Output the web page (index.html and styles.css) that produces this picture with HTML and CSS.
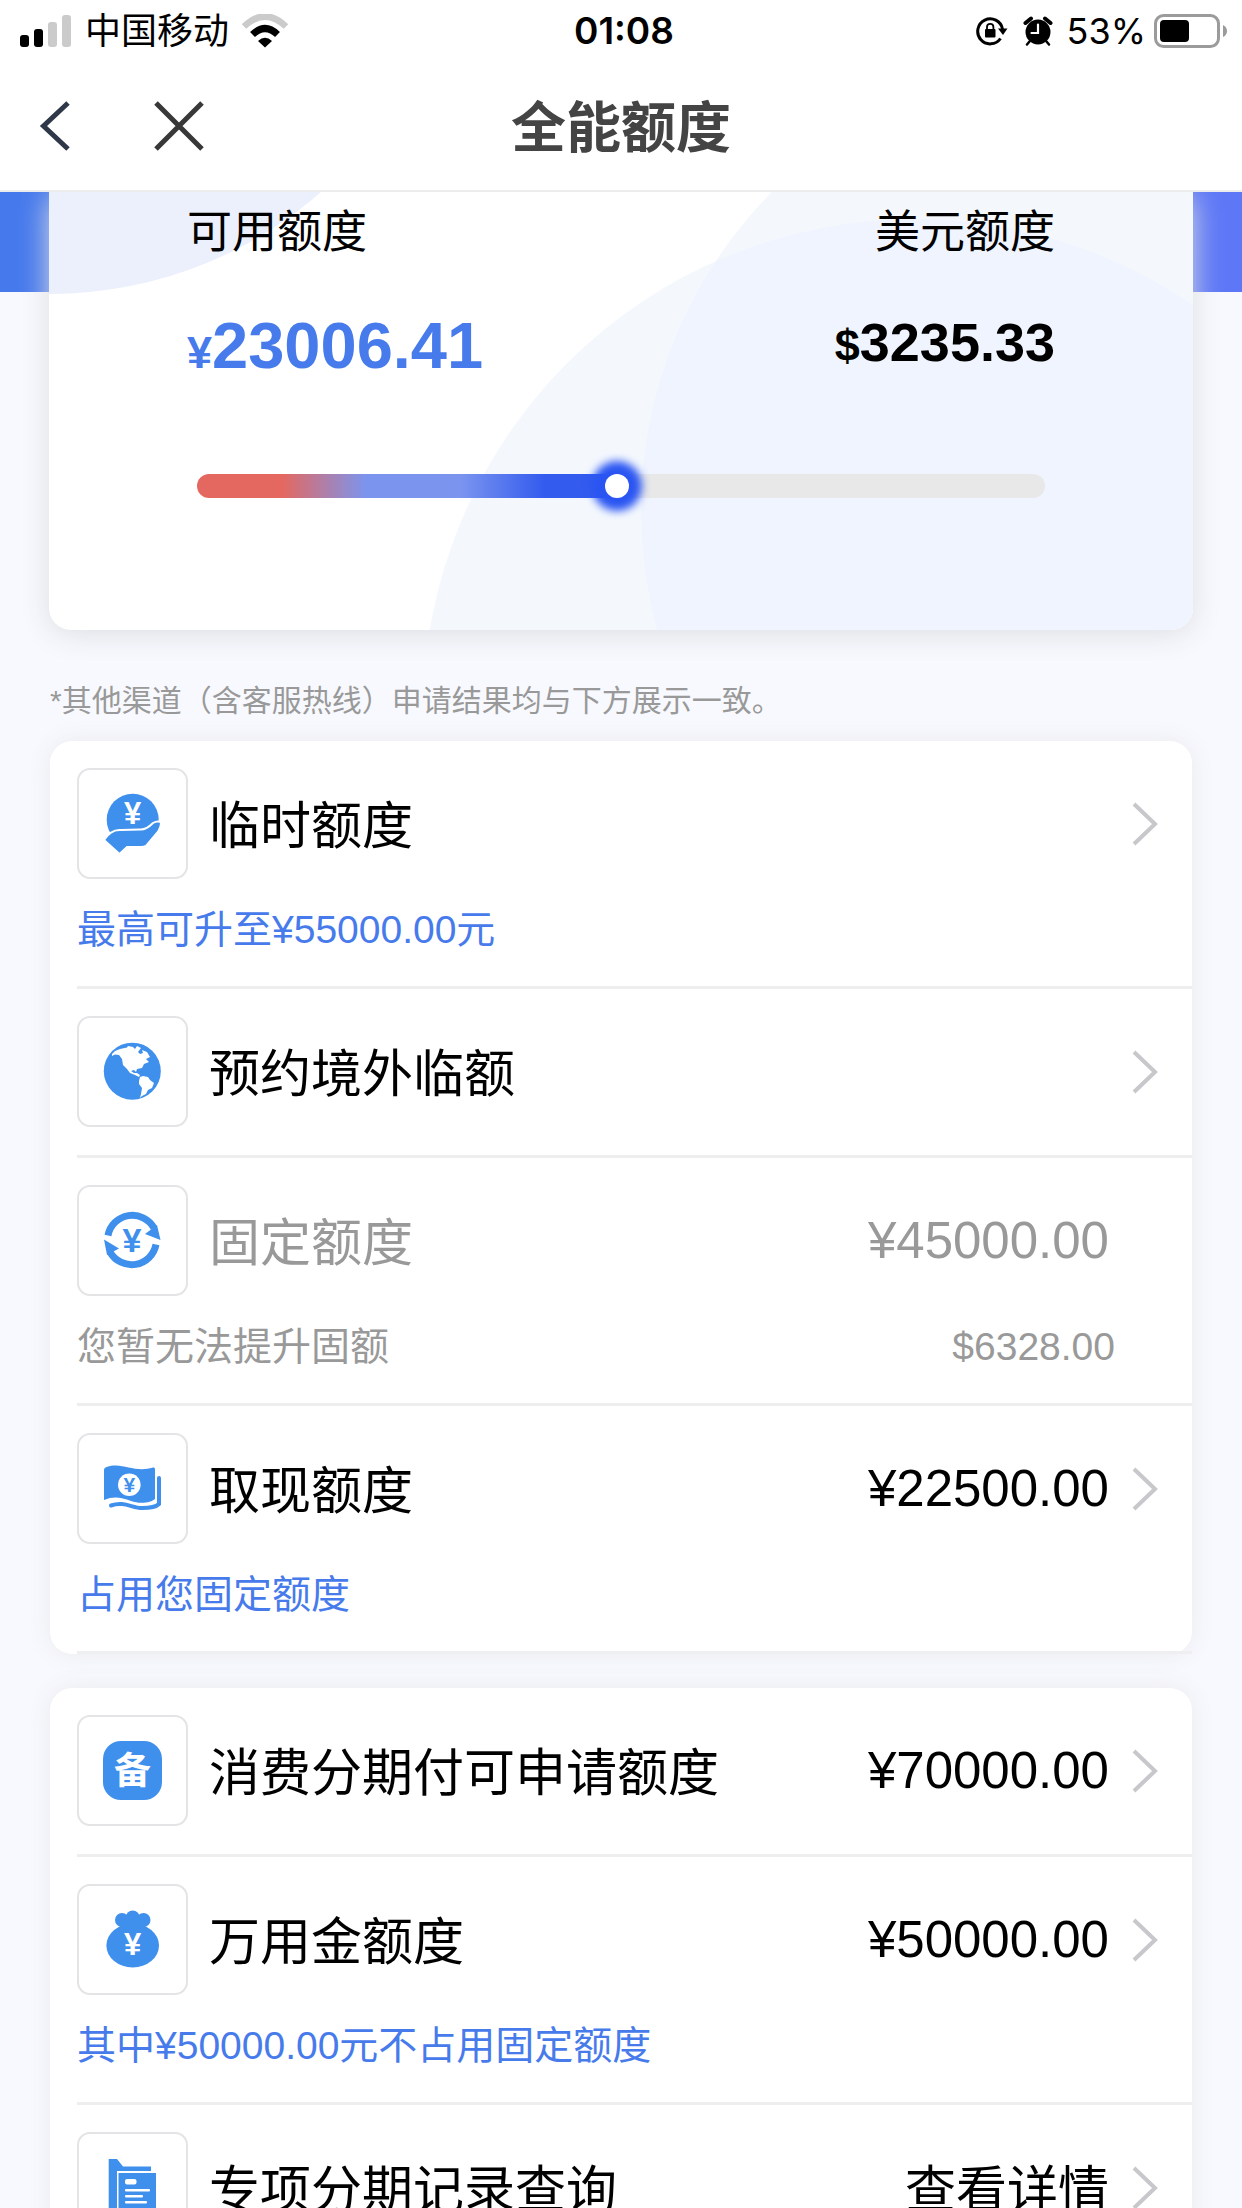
FILE: index.html
```html
<!DOCTYPE html>
<html lang="zh-CN">
<head>
<meta charset="utf-8">
<meta name="viewport" content="width=device-width, initial-scale=1">
<title>全能额度</title>
<link rel="stylesheet" href="styles.css">
</head>
<body>
<div class="app">
  <div class="status">
    <div class="status-left">
      <svg width="52" height="34" viewBox="0 0 52 34" aria-hidden="true">
        <rect x="0" y="21" width="9" height="12" rx="3"/>
        <rect x="14" y="15" width="9" height="18" rx="3"/>
        <rect x="28" y="8" width="9" height="25" rx="3" fill="#cbcbcb"/>
        <rect x="42" y="1" width="9" height="32" rx="3" fill="#cbcbcb"/>
      </svg>
      <span class="carrier">中国移动</span>
      <svg width="46" height="34" viewBox="0 0 46 34" fill="none" aria-hidden="true">
        <path d="M2 12.500Q23-7.500 44 12.500" stroke="#cbcbcb" stroke-width="6.500"/>
        <path d="M10.500 20.500Q23 8.500 35.500 20.500" stroke="#000" stroke-width="7"/>
        <path d="M16 27Q23 20.500 30 27L23 33.500Z" fill="#000"/>
      </svg>
    </div>
    <span class="time">01:08</span>
    <div class="status-right">
      <svg width="34" height="30" viewBox="0 0 34 30" fill="none" aria-hidden="true">
        <path d="M25.500 22.500A12.500 12.500 0 1 1 27.500 13" stroke="#000" stroke-width="3"/>
        <path d="M23 12.500H32.500L28 19Z" fill="#000"/>
        <rect x="10" y="13" width="10.500" height="8.500" rx="1" fill="#000"/>
        <path d="M12 13.500V11a3.200 3.200 0 0 1 6.400 0V13.500" stroke="#000" stroke-width="1.800"/>
      </svg>
      <svg width="30" height="30" viewBox="0 0 30 30" fill="none" stroke-linecap="round" aria-hidden="true">
        <circle cx="15" cy="16" r="12.500" fill="#000"/>
        <path d="M2.500 7L8 2.500M27.500 7L22 2.500" stroke="#000" stroke-width="4"/>
        <path d="M6.500 25.500L4 28.500M23.500 25.500L26 28.500" stroke="#000" stroke-width="2.500"/>
        <path d="M15 8.500V17H8.500" stroke="#fff" stroke-width="2.200"/>
      </svg>
      <div class="power">
        <span>53%</span>
        <svg width="74" height="34" viewBox="0 0 74 34" fill="none" aria-hidden="true">
          <rect x="1.500" y="1.500" width="63" height="31" rx="8" stroke="#9b9b9b" stroke-width="3"/>
          <rect x="6" y="6" width="29" height="22" rx="4" fill="#000"/>
          <path d="M69 11Q73 13 73 17T69 23Z" fill="#9b9b9b"/>
        </svg>
      </div>
    </div>
  </div>

  <header class="nav">
    <div class="nav-buttons">
      <button class="icon-button" type="button" aria-label="返回">
        <svg width="54" height="54" viewBox="0 0 54 54" fill="none" stroke="#2f3849" stroke-width="5"><path d="M40 4L15.500 27L40 50"/></svg>
      </button>
      <button class="icon-button" type="button" aria-label="关闭">
        <svg width="54" height="54" viewBox="0 0 54 54" fill="none" stroke="#383838" stroke-width="5"><path d="M4 4L50 50M50 4L4 50"/></svg>
      </button>
    </div>
    <h1 class="nav-title">全能额度</h1>
  </header>

  <main class="content">
    <section class="summary">
      <div class="summary-card">
        <svg class="summary-bg" viewBox="0 0 1144 438" preserveAspectRatio="xMaxYMin slice" aria-hidden="true">
          <clipPath id="overlap"><circle cx="866" cy="519" r="492"/></clipPath>
          <circle cx="1" cy="-309" r="411" fill="#ecf0fc"/>
          <circle cx="866" cy="519" r="492" fill="#f4f8fd"/>
          <circle cx="1044" cy="318" r="452" fill="#f4f8fd"/>
          <circle cx="1044" cy="318" r="452" fill="#f0f4fe" clip-path="url(#overlap)"/>
        </svg>
        <dl class="limits">
          <div class="limit">
            <dt>可用额度</dt>
            <dd class="limit-main"><small>¥</small>23006.41</dd>
          </div>
          <div class="limit limit-end">
            <dt>美元额度</dt>
            <dd class="limit-usd"><small>$</small>3235.33</dd>
          </div>
        </dl>
        <input class="meter" type="range" min="0" max="1000" value="495" aria-label="可用额度比例">
      </div>
    </section>

    <p class="note">*其他渠道（含客服热线）申请结果均与下方展示一致。</p>

    <ul class="list">
      <li class="item"><a class="link" href="#temp">
        <div class="row">
          <svg class="badge" viewBox="0 0 111 111" aria-hidden="true">
            <circle cx="55.700" cy="51.700" r="26"/>
            <path d="M27 72Q34 61 44 62L63 61.500Q69 62 76 55Q80 52.500 84 54Q84 60 80 65L69 78Q67 79 64 79H50L42.500 86Z" stroke="#fff" stroke-width="2"/>
            <text class="glyph-yen" x="55.500" y="56" font-size="31">¥</text>
          </svg>
          <span class="name">临时额度</span>
          <svg class="chevron" viewBox="0 0 26 44" aria-hidden="true"><path d="M2 2L23 22L2 42"/></svg>
        </div>
        <div class="sub"><span>最高可升至¥55000.00元</span></div>
      </a></li>
      <li class="item"><a class="link" href="#abroad">
        <div class="row">
          <svg class="badge" viewBox="0 0 111 111" aria-hidden="true">
            <circle cx="55.300" cy="55.200" r="28.500"/>
            <path fill="#fff" d="M35 38L38 35L43 33L50 31.500L51 30L56 31L58 33L60 30L64 32L61 36L63 38L66 37L65 34L70 36L73 41L69 43L72 46L67 48L65 52L60 53L59 56L57 54L54 55L57 57L60 57L63 59L62 61L58 59L53 57L50 53L46 49L45 43L42 39L38 38.500L35 40Z"/>
            <path fill="#fff" d="M63 61L66 60L71 61L73 64L77 67L75 72L71 74L69 78L65 80L63 82L64 78L65 72L62 68L62 65Z"/>
          </svg>
          <span class="name">预约境外临额</span>
          <svg class="chevron" viewBox="0 0 26 44" aria-hidden="true"><path d="M2 2L23 22L2 42"/></svg>
        </div>
      </a></li>
      <li class="item item-off">
        <div class="row">
          <svg class="badge" viewBox="0 0 111 111" aria-hidden="true">
            <g class="stroke" stroke-width="7"><path d="M31 50.500A24.800 24.800 0 0 1 77 43"/><path d="M79 59.500A24.800 24.800 0 0 1 33 67"/></g>
            <path d="M68 49L80 40L83.500 55Z"/><path d="M42 63.500L27 54.500L30 70Z"/>
            <text class="glyph-yen glyph-blue" x="55" y="67" font-size="34">¥</text>
          </svg>
          <span class="name">固定额度</span>
          <span class="amount">¥45000.00</span>
        </div>
        <div class="sub"><span>您暂无法提升固额</span><span class="sub-end">$6328.00</span></div>
      </li>
      <li class="item"><a class="link" href="#cash">
        <div class="row">
          <svg class="badge" viewBox="0 0 111 111" aria-hidden="true">
            <path d="M27 37C27 34 32 32.500 39 32.500C50 33 62 39 76 34.500Q78 34 78 36V66C74 70 62 71 54 68C44 64 36 63 27 67Z"/>
            <path class="stroke" stroke-width="4" stroke-linecap="round" d="M34 72.500C47 68 55 75 65 75C73 75 79 74 82 71V45"/>
            <circle cx="52.300" cy="51.700" r="11.300" fill="#fff"/>
            <text class="glyph-yen glyph-blue" x="52.300" y="59" font-size="21">¥</text>
          </svg>
          <span class="name">取现额度</span>
          <span class="amount">¥22500.00</span>
          <svg class="chevron" viewBox="0 0 26 44" aria-hidden="true"><path d="M2 2L23 22L2 42"/></svg>
        </div>
        <div class="sub"><span>占用您固定额度</span></div>
      </a></li>
    </ul>

    <ul class="list">
      <li class="item"><a class="link" href="#installment">
        <div class="row">
          <svg class="badge" viewBox="0 0 111 111" aria-hidden="true">
            <rect x="26" y="26" width="59" height="59" rx="18"/>
            <text class="glyph-cjk" x="55.500" y="69" font-size="37">备</text>
          </svg>
          <span class="name">消费分期付可申请额度</span>
          <span class="amount">¥70000.00</span>
          <svg class="chevron" viewBox="0 0 26 44" aria-hidden="true"><path d="M2 2L23 22L2 42"/></svg>
        </div>
      </a></li>
      <li class="item"><a class="link" href="#wanyong">
        <div class="row">
          <svg class="badge" viewBox="0 0 111 111" aria-hidden="true">
            <ellipse cx="55.700" cy="61.500" rx="26.300" ry="22"/>
            <circle cx="45" cy="36" r="7"/><circle cx="55.700" cy="33.500" r="7"/><circle cx="66.500" cy="36" r="7"/>
            <path d="M43 35H69L66 42Q70 44 75 48H36Q41 44 45 42Z"/>
            <text class="glyph-yen" x="55.700" y="71" font-size="31">¥</text>
          </svg>
          <span class="name">万用金额度</span>
          <span class="amount">¥50000.00</span>
          <svg class="chevron" viewBox="0 0 26 44" aria-hidden="true"><path d="M2 2L23 22L2 42"/></svg>
        </div>
        <div class="sub"><span>其中¥50000.00元不占用固定额度</span></div>
      </a></li>
      <li class="item"><a class="link" href="#records">
        <div class="row">
          <svg class="badge" viewBox="0 0 111 111" aria-hidden="true">
            <path d="M31.700 27H40L46 34.500H74V39H40V84H31.700Z"/>
            <rect x="41.500" y="41" width="37.500" height="43"/>
            <g fill="#fff"><rect x="48" y="47" width="11.500" height="5.500" rx="2"/><rect x="48" y="57" width="25" height="2.600" rx="1"/><rect x="48" y="63" width="18" height="2.600" rx="1"/><rect x="48" y="69" width="22" height="2.600" rx="1"/></g>
          </svg>
          <span class="name">专项分期记录查询</span>
          <span class="amount amount-text">查看详情</span>
          <svg class="chevron" viewBox="0 0 26 44" aria-hidden="true"><path d="M2 2L23 22L2 42"/></svg>
        </div>
      </a></li>
    </ul>
  </main>
</div>
</body>
</html>
```
FILE: styles.css
```css
*, *::before, *::after { box-sizing: border-box; }

body {
  margin: 0;
  background: #f8f9fe;
  color: #000;
  font-family: "Liberation Sans", "Noto Sans CJK SC", sans-serif;
}

h1, p, ul, dl, dd { margin: 0; padding: 0; }
ul { list-style: none; }

.app {
  display: flex;
  flex-direction: column;
  height: 100vh;
}

/* Status bar */
.status {
  display: grid;
  grid-template-columns: 1fr auto 1fr;
  align-items: center;
  height: 62px;
  padding: 0 14px 0 20px;
  background: #fff;
  font-family: Inter, "Noto Sans CJK SC", sans-serif;
  font-size: 36px;
  line-height: 62px;
}
.status svg { display: block; }
.status-left { display: flex; align-items: center; gap: 13px; }
.status-right { display: flex; align-items: center; justify-content: flex-end; gap: 14px; }
.power { display: flex; align-items: center; gap: 8px; }
.time { font-size: 37px; font-weight: 600; }

/* Title bar */
.nav {
  display: grid;
  grid-template-columns: 1fr auto 1fr;
  align-items: center;
  height: 130px;
  border-bottom: 2px solid #ececec;
  background: #fff;
}
.nav-buttons { display: flex; gap: 70px; padding-left: 28px; }
.icon-button { padding: 0; border: 0; background: none; }
.icon-button svg { display: block; }
.nav-title {
  padding-top: 4px;
  color: #444;
  font-size: 55px;
  font-weight: 700;
  line-height: 64px;
}

.content {
  flex: 1;
  min-height: 0;
  overflow: hidden auto;
  scrollbar-width: none;
}

/* Summary */
.summary {
  padding: 0 49px;
  background: linear-gradient(90deg, #4579ec, #5d77f7) top / 100% 100px no-repeat;
}
.summary-card {
  position: relative;
  height: 438px;
  padding: 14px 138px 0;
  border-radius: 0 0 22px 22px;
  background: #fff;
  box-shadow: 0 4px 30px #dcdee2;
}
.summary-bg {
  position: absolute;
  inset: 0;
  width: 100%;
  height: 100%;
  border-radius: inherit;
}
.limits {
  position: relative;
  display: flex;
  justify-content: space-between;
  font-size: 45px;
}
.limit-end { text-align: right; }
.limit dt { line-height: 54px; }
.limit dd { margin-top: 50px; font-weight: 700; line-height: 72px; }
.limit small { font-size: 45px; }
.limit-main { color: #477bec; font-size: 65px; }
.limit .limit-usd { font-size: 54px; line-height: 64px; }

.meter {
  position: relative;
  display: block;
  width: calc(100% - 20px);
  height: 24px;
  margin: 85px 10px 0;
  border-radius: 12px;
  appearance: none;
  background: linear-gradient(90deg, #e4685f 10%, #7b95ef 20%, #7b95ef 31%, #335bee 41%, #335bee 49%, #e8e8e8 49%);
}
.meter::-webkit-slider-thumb {
  appearance: none;
  width: 24px;
  height: 24px;
  border-radius: 50%;
  background: #fff;
  box-shadow: 0 0 9px 13px #2a55f2;
}

.note {
  padding: 48px 50px 0;
  color: #999;
  font-size: 30px;
  line-height: 45px;
}

/* Limit lists */
.list {
  margin: 18px 50px 34px;
  padding-left: 27px;
  border-radius: 22px;
  background: #fff;
  box-shadow: 0 0 24px #e9eaee;
}
.item { border-bottom: 3px solid #eee; }
.list .item:last-child { border-bottom-color: #efeff1; }
.item-off { color: #999; }
.link { display: block; color: inherit; text-decoration: none; }
.row {
  display: flex;
  align-items: center;
  padding: 27px 34px 0 0;
  font-size: 51px;
  line-height: 72px;
}
.row:last-child { padding-bottom: 28px; }
.name { flex: 1; margin-left: 21px; }
.name, .amount-text { padding-top: 6px; }
.item-off .amount { margin-right: 49px; }

.badge {
  width: 111px;
  height: 111px;
  border-radius: 13px;
  box-shadow: inset 0 0 0 2px #e4e4e6;
  fill: #3f8fec;
}
.badge .stroke { fill: none; stroke: #3f8fec; }
.badge text { fill: #fff; font-weight: 700; text-anchor: middle; }
.badge .glyph-blue { fill: #3f8fec; }
.badge .glyph-cjk { font-family: "Noto Sans CJK SC", sans-serif; }

.chevron {
  width: 26px;
  height: 44px;
  margin-left: 23px;
  fill: none;
  stroke: #c7c7cc;
  stroke-width: 4;
}

.sub {
  display: flex;
  justify-content: space-between;
  padding: 22px 77px 28px 0;
  color: #477bec;
  font-size: 39px;
  line-height: 57px;
}
.item-off .sub { color: #999; }
```
